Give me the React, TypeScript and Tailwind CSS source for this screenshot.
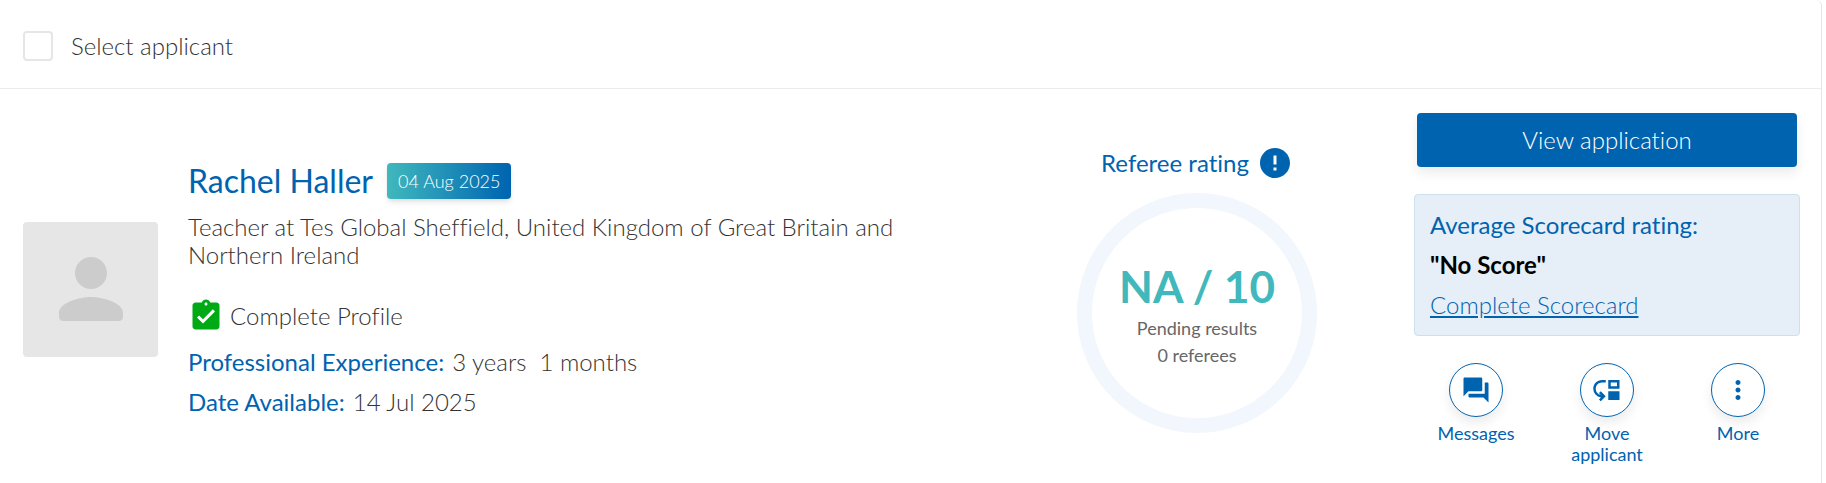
import { useState } from 'react';
import type { IconType } from 'react-icons';
import { MdAssignmentTurnedIn, MdError, MdForum, MdMoreVert, MdMoveDown } from 'react-icons/md';

interface Applicant {
  name: string;
  appliedOn: string;
  headline: string;
  experience: string;
  availableFrom: string;
}

const APPLICANT: Applicant = {
  name: 'Rachel Haller',
  appliedOn: '04 Aug 2025',
  headline: 'Teacher at Tes Global Sheffield, United Kingdom of Great Britain and Northern Ireland',
  experience: '3 years  1 months',
  availableFrom: '14 Jul 2025',
};

const ACTIONS: { label: string; icon: IconType }[] = [
  { label: 'Messages', icon: MdForum },
  { label: 'Move applicant', icon: MdMoveDown },
  { label: 'More', icon: MdMoreVert },
];

const Avatar = () => (
  <div className="flex size-[135px] shrink-0 items-center justify-center rounded bg-[#e6e6e6]">
    <svg viewBox="0 0 24 24" className="size-24 fill-[#cccccc]" aria-hidden="true">
      <path d="M12 12c2.21 0 4-1.79 4-4s-1.79-4-4-4-4 1.79-4 4 1.79 4 4 4zm0 2c-2.67 0-8 1.34-8 4v1c0 .55.45 1 1 1h14c.55 0 1-.45 1-1v-1c0-2.66-5.33-4-8-4z" />
    </svg>
  </div>
);

const Details = ({ applicant }: { applicant: Applicant }) => (
  <div className="min-w-0 flex-1 pt-1.5 text-2xl font-light">
    <div className="flex items-center gap-3.5">
      <h2 className="text-[32px] leading-9 font-normal text-[#0063b0]">{applicant.name}</h2>
      <span className="rounded bg-linear-to-r from-[#40b8bc] to-[#0063b0] px-[11px] text-lg leading-9 text-white shadow-md">
        {applicant.appliedOn}
      </span>
    </div>
    <p className="mt-3.5 max-w-[740px] leading-7">{applicant.headline}</p>
    <div className="mt-[29px] flex items-center gap-1.5">
      <MdAssignmentTurnedIn className="size-9 text-[#00aa14]" />
      <span>Complete Profile</span>
    </div>
    <dl className="mt-2 leading-10">
      <div className="flex gap-2">
        <dt className="font-normal text-[#0063b0]">Professional Experience:</dt>
        <dd className="whitespace-pre">{applicant.experience}</dd>
      </div>
      <div className="flex gap-2">
        <dt className="font-normal text-[#0063b0]">Date Available:</dt>
        <dd>{applicant.availableFrom}</dd>
      </div>
    </dl>
  </div>
);

const RefereeRating = () => (
  <div className="flex w-[434px] shrink-0 flex-col items-center">
    <div className="flex items-center gap-2">
      <h3 className="text-2xl text-[#0063b0]">Referee rating</h3>
      <MdError className="size-9 text-[#0063b0]" />
    </div>
    <div className="mt-3 flex size-60 flex-col items-center justify-center rounded-full border-[15px] border-[#f1f7fc] pt-0.5 text-lg leading-[27px] text-[#666666]">
      <strong className="mb-0.5 text-[44px] leading-[54px] font-bold text-[#40b8bc]">NA / 10</strong>
      <span>Pending results</span>
      <span>0 referees</span>
    </div>
  </div>
);

const ActionPanel = () => (
  <div className="w-[386px] shrink-0">
    <div className="px-[3px]">
      <button
        type="button"
        className="h-[54px] w-full rounded bg-[#0063b0] text-2xl font-light text-white shadow-[0_6px_12px_rgba(0,0,0,0.08)]"
      >
        View application
      </button>
    </div>
    <div className="mt-[27px] rounded border border-[#cce0ef] bg-[#e6eef7] px-[15px] py-2.5 text-2xl leading-10">
      <h3 className="text-[#0063b0]">Average Scorecard rating:</h3>
      <p className="font-bold text-black">"No Score"</p>
      <a href="#scorecard" className="block font-light text-[#0063b0] underline">
        Complete Scorecard
      </a>
    </div>
    <div className="mt-[27px] flex justify-between px-2">
      {ACTIONS.map(({ label, icon: Icon }) => (
        <button
          key={label}
          type="button"
          className="flex w-[108px] flex-col items-center gap-1.5 text-lg leading-[21px] text-[#0063b0]"
        >
          <span className="flex size-[54px] items-center justify-center rounded-full border border-[#0063b0] shadow-[0_6px_12px_rgba(0,0,0,0.08)]">
            <Icon className="size-[30px]" />
          </span>
          {label}
        </button>
      ))}
    </div>
  </div>
);

const App = () => {
  const [selected, setSelected] = useState(false);

  return (
    <main className="overflow-hidden bg-white pr-1 font-[Lato,sans-serif] text-[#333333] [font-variant-ligatures:none]">
      <article className="rounded-t-md border-r border-[#e6e6e6]">
        <header className="flex h-[89px] items-center border-b border-[#ececec] px-[23px] pt-1">
          <label className="flex items-center gap-[18px] text-2xl font-light">
            <input
              type="checkbox"
              checked={selected}
              onChange={e => setSelected(e.target.checked)}
              className="size-[30px] appearance-none rounded border-2 border-[#e6e6e6] bg-white checked:border-[#0063b0] checked:bg-[#0063b0]"
            />
            Select applicant
          </label>
        </header>
        <div className="flex items-center py-6 pr-[21px] pl-[23px]">
          <div className="flex min-w-0 flex-1 items-center gap-[30px]">
            <Avatar />
            <Details applicant={APPLICANT} />
          </div>
          <RefereeRating />
          <ActionPanel />
        </div>
      </article>
    </main>
  );
};

export default App;
